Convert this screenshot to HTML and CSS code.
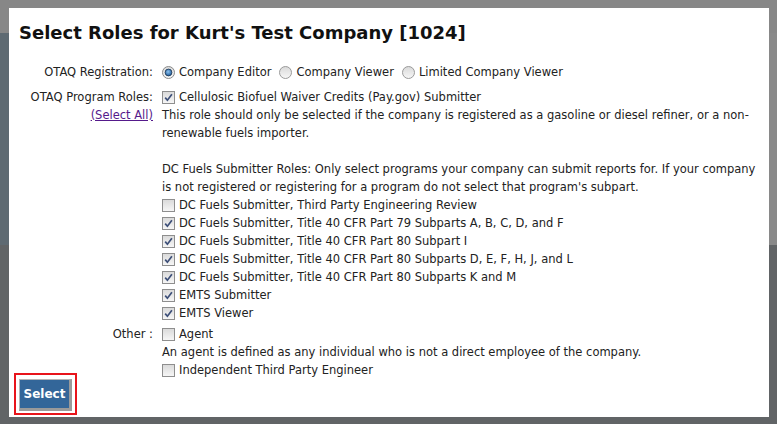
FILE: index.html
```html
<!DOCTYPE html>
<html lang="en">
<head>
  <meta charset="UTF-8">
  <title>Select Roles</title>
  <link rel="stylesheet" href="styles.css">
</head>
<body>

  <svg class="defs" width="0" height="0" aria-hidden="true">
    <defs>
      <linearGradient id="box-fill" x1="0" y1="0" x2="0" y2="1">
        <stop offset="0" stop-color="#d9d9d9"/>
        <stop offset="1" stop-color="#f7f7f7"/>
      </linearGradient>
      <radialGradient id="dot-fill" cx="0.45" cy="0.4" r="0.6">
        <stop offset="0" stop-color="#8ec3f0"/>
        <stop offset="1" stop-color="#1c5a99"/>
      </radialGradient>
      <symbol id="cb-off" viewBox="0 0 13 13">
        <rect x="0.5" y="0.5" width="12" height="12" fill="url(#box-fill)" stroke="#8e8e8e"/>
      </symbol>
      <symbol id="cb-on" viewBox="0 0 13 13">
        <rect x="0.5" y="0.5" width="12" height="12" fill="url(#box-fill)" stroke="#8e8e8e"/>
        <path d="M3.2 6.6 L5.4 9.2 L9.9 3.2" fill="none" stroke="#3d4f78" stroke-width="1.7"/>
      </symbol>
      <symbol id="rd-off" viewBox="0 0 13 13">
        <circle cx="6.5" cy="6.5" r="6" fill="url(#box-fill)" stroke="#9a9a9a"/>
      </symbol>
      <symbol id="rd-on" viewBox="0 0 13 13">
        <circle cx="6.5" cy="6.5" r="6" fill="url(#box-fill)" stroke="#8a8a8a"/>
        <circle cx="6.5" cy="6.5" r="3.4" fill="url(#dot-fill)" stroke="#1d3550" stroke-width="0.8"/>
      </symbol>
    </defs>
  </svg>

  <div class="page-behind">
    <div class="behind-top"></div>
    <div class="behind-side"></div>
    <div class="behind-bottom"></div>
  </div>

  <div class="modal">
    <h1>Select Roles for Kurt's Test Company [1024]</h1>

    <div class="role-form">
      <div class="field-label">OTAQ Registration:</div>
      <div class="field-value options">
        <label class="choice"><svg class="mark"><use href="#rd-on"/></svg>Company Editor</label>
        <label class="choice"><svg class="mark"><use href="#rd-off"/></svg>Company Viewer</label>
        <label class="choice"><svg class="mark"><use href="#rd-off"/></svg>Limited Company Viewer</label>
      </div>

      <div class="field-label">
        OTAQ Program Roles:<br>
        <a href="#" class="select-all">(Select All)</a>
      </div>
      <div class="field-value">
        <label class="choice"><svg class="mark"><use href="#cb-on"/></svg>Cellulosic Biofuel Waiver Credits (Pay.gov) Submitter</label>
        <p class="note">This role should only be selected if the company is registered as a gasoline or diesel refiner, or a non-renewable fuels importer.</p>
        <p class="note spaced">DC Fuels Submitter Roles: Only select programs your company can submit reports for. If your company is not registered or registering for a program do not select that program's subpart.</p>
        <label class="choice"><svg class="mark"><use href="#cb-off"/></svg>DC Fuels Submitter, Third Party Engineering Review</label>
        <label class="choice"><svg class="mark"><use href="#cb-on"/></svg>DC Fuels Submitter, Title 40 CFR Part 79 Subparts A, B, C, D, and F</label>
        <label class="choice"><svg class="mark"><use href="#cb-on"/></svg>DC Fuels Submitter, Title 40 CFR Part 80 Subpart I</label>
        <label class="choice"><svg class="mark"><use href="#cb-on"/></svg>DC Fuels Submitter, Title 40 CFR Part 80 Subparts D, E, F, H, J, and L</label>
        <label class="choice"><svg class="mark"><use href="#cb-on"/></svg>DC Fuels Submitter, Title 40 CFR Part 80 Subparts K and M</label>
        <label class="choice"><svg class="mark"><use href="#cb-on"/></svg>EMTS Submitter</label>
        <label class="choice"><svg class="mark"><use href="#cb-on"/></svg>EMTS Viewer</label>
      </div>

      <div class="field-label tight">Other :</div>
      <div class="field-value tight">
        <label class="choice"><svg class="mark"><use href="#cb-off"/></svg>Agent</label>
        <p class="note">An agent is defined as any individual who is not a direct employee of the company.</p>
        <label class="choice"><svg class="mark"><use href="#cb-off"/></svg>Independent Third Party Engineer</label>
      </div>
    </div>

    <div class="actions">
      <div class="highlight">
        <button class="select-btn">Select</button>
      </div>
    </div>
  </div>

</body>
</html>
```

FILE: styles.css
```css
html, body {
  margin: 0;
  height: 100%;
}

body {
  font-family: 'DejaVu Sans', Verdana, sans-serif;
  font-size: 11.5px;
  color: #222;
  background-color: #5d6164;
  overflow: hidden;
}

.defs {
  position: absolute;
}

/* dimmed page behind the dialog */
.page-behind {
  height: 100%;
  display: flex;
  flex-direction: column;
}

.behind-top {
  height: 33px;
  background-color: #878787;
}

.behind-side {
  height: 212px;
  background: linear-gradient(to right, #5e6a72 0, #5e6a72 50%, #898989 50%);
}

.behind-bottom {
  flex: 1;
  background-color: #616466;
}

.modal {
  position: absolute;
  left: 9px;
  top: 8px;
  width: 760px;
  height: 409px;
  box-sizing: border-box;
  background-color: #fff;
  padding: 12px 8px 0 5px;
}

h1 {
  margin: 0 0 17px 5px;
  font-size: 18px;
  line-height: 26px;
  font-weight: bold;
  color: #111;
}

.role-form {
  display: grid;
  grid-template-columns: 134px 1fr;
  column-gap: 9px;
  row-gap: 7px;
  padding-left: 5px;
  line-height: 18px;
}

.field-label {
  text-align: right;
}

.tight {
  margin-top: -4px;
}

.options {
  display: flex;
  gap: 8px;
}

.choice {
  display: flex;
  align-items: center;
  gap: 4px;
}

.mark {
  width: 13px;
  height: 13px;
  flex: none;
}

.note {
  margin: 0;
}

.note.spaced {
  margin-top: 18px;
}

.select-all {
  color: #551a8b;
}

.actions {
  margin-top: -6px;
}

.highlight {
  display: inline-block;
  border: 2px solid #e8141b;
  padding: 4px 3px 2px 3px;
}

.select-btn {
  display: block;
  width: 53px;
  height: 32px;
  background-color: #336699;
  color: #fff;
  font-family: 'DejaVu Sans', Verdana, sans-serif;
  font-size: 12px;
  font-weight: bold;
  border: 1px solid #b5b5b5;
  border-right: 3px solid #9a9a9a;
  border-bottom: 3px solid #9a9a9a;
  padding: 0;
}
```
